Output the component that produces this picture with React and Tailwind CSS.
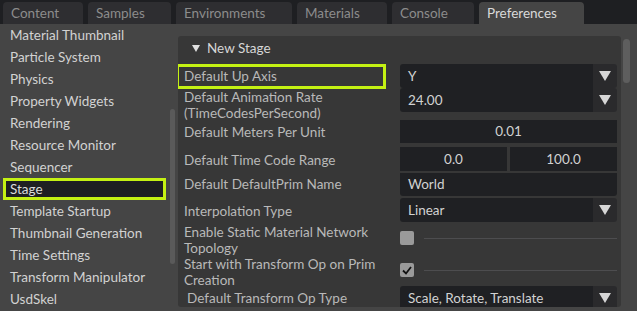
import React from "react";

const tabs = [
  { name: "Content", w: "w-[80px]" },
  { name: "Samples", w: "w-[83px]" },
  { name: "Environments", w: "w-[116px]" },
  { name: "Materials", w: "w-[90px]" },
  { name: "Console", w: "w-[82px]" },
  { name: "Preferences", w: "w-[105px]", active: true },
];

const pages = [
  "Material Thumbnail",
  "Particle System",
  "Physics",
  "Property Widgets",
  "Rendering",
  "Resource Monitor",
  "Sequencer",
  "Stage",
  "Template Startup",
  "Thumbnail Generation",
  "Time Settings",
  "Transform Manipulator",
  "UsdSkel",
];

function Arrow() {
  return (
    <svg width="12" height="10" viewBox="0 0 12 10">
      <path d="M0 0 L12 0 L6 10 Z" fill="#d6d6d6" />
    </svg>
  );
}

function Combo({ value, className = "" }) {
  return (
    <div className={`flex h-[24px] w-[217px] overflow-hidden rounded-[3px] ${className}`}>
      <div className="flex flex-1 items-center bg-[#1f2023] pl-[8px] text-[#d2d2d2]">{value}</div>
      <div className="flex w-[24px] items-center justify-center bg-[#2a2a2c]">
        <Arrow />
      </div>
    </div>
  );
}

function Field({ value, className = "" }) {
  return (
    <div className={`flex h-[23px] items-center justify-center bg-[#1f2023] text-[#d2d2d2] ${className}`}>
      {value}
    </div>
  );
}

function Check({ checked }) {
  return (
    <div className="mt-[7px] flex w-[217px] items-center">
      <div className="flex h-[14px] w-[14px] items-center justify-center rounded-[2px] bg-[#9a9a9a]">
        {checked && (
          <svg width="10" height="9" viewBox="0 0 10 9">
            <path d="M1 4.5 L4 7.5 L9 1" stroke="#111" strokeWidth="1.8" fill="none" />
          </svg>
        )}
      </div>
      <div className="ml-[10px] h-px flex-1 bg-[#4d4d4f]" />
    </div>
  );
}

function Label({ children, className = "" }) {
  return <div className={`w-[222px] pl-[6px] leading-[16px] text-[#b9b9b9] ${className}`}>{children}</div>;
}

export default function App() {
  return (
    <div
      className="flex h-[311px] w-[637px] flex-col overflow-hidden bg-[#454545] text-[13.5px]"
      style={{ fontFamily: "Lato, 'Open Sans', sans-serif" }}
    >
      {/* tab strip */}
      <div className="flex h-[24px] items-end gap-[5px] bg-[#1e1f22] pl-[3px]">
        {tabs.map((t) => (
          <div
            key={t.name}
            className={`flex h-[22px] items-center rounded-t-[4px] pl-[8px] ${t.w} ${
              t.active ? "bg-[#454545] text-[#d9d9d9]" : "bg-[#2e2e31] text-[#8c8c8c]"
            }`}
          >
            {t.name}
          </div>
        ))}
      </div>

      <div className="flex flex-1">
        {/* page list */}
        <div className="relative w-[178px]">
          {pages.map((p) =>
            p === "Stage" ? (
              <div
                key={p}
                className="ml-[3px] flex h-[22px] w-[163px] items-center border-[3px] border-[#c4f113] bg-[#1e1f22] pl-[4px] text-[#dadada]"
              >
                {p}
              </div>
            ) : (
              <div key={p} className="flex h-[22px] items-center pl-[10px] text-[#d2d2d2]">
                {p}
              </div>
            )
          )}
          <div className="absolute left-[170px] top-[85px] h-[155px] w-[5px] rounded-full bg-[#5a5a5a]" />
        </div>

        {/* settings panel */}
        <div className="mt-[12px] h-[271px] w-[443px] overflow-hidden rounded-[3px] bg-[#373737]">
          <div className="flex h-[24px] items-center pl-[14px] text-[#d6d6d6]">
            <svg width="8" height="7" viewBox="0 0 8 7" className="mr-[7px]">
              <path d="M0 0 L8 0 L4 7 Z" fill="#e0e0e0" />
            </svg>
            New Stage
          </div>

          <div className="mt-[4px] flex flex-col">
            <div className="relative flex h-[24px] items-center">
              <div className="absolute left-[-2px] top-[0px] h-[25px] w-[210px] border-[3px] border-[#c4f113]" />
              <Label>Default Up Axis</Label>
              <Combo value="Y" />
            </div>

            <div className="flex h-[32px] items-start">
              <Label className="pt-[1px]">
                Default Animation Rate
                <br />
                (TimeCodesPerSecond)
              </Label>
              <Combo value="24.00" />
            </div>

            <div className="flex h-[24px] items-start">
              <Label className="pt-[4px]">Default Meters Per Unit</Label>
              <Field value="0.01" className="w-[217px]" />
            </div>

            <div className="flex h-[28px] items-start">
              <Label className="pt-[8px]">Default Time Code Range</Label>
              <div className="mt-[3px] flex w-[217px] gap-[3px]">
                <Field value="0.0" className="h-[24px] w-[107px]" />
                <Field value="100.0" className="h-[24px] flex-1" />
              </div>
            </div>

            <div className="flex h-[24px] items-center">
              <Label>Default DefaultPrim Name</Label>
              <div className="flex h-[23px] w-[217px] items-center rounded-b-[3px] bg-[#1f2023] pl-[8px] text-[#d2d2d2]">
                World
              </div>
            </div>

            <div className="flex h-[28px] items-start">
              <Label className="pt-[7px]">Interpolation Type</Label>
              <Combo value="Linear" className="mt-[2px]" />
            </div>

            <div className="flex h-[32px] items-start">
              <Label>
                Enable Static Material Network
                <br />
                Topology
              </Label>
              <Check />
            </div>

            <div className="flex h-[30px] items-start">
              <Label>
                Start with Transform Op on Prim
                <br />
                Creation
              </Label>
              <Check checked />
            </div>

            <div className="flex h-[24px] items-center">
              <Label className="pl-[9px]">Default Transform Op Type</Label>
              <Combo value="Scale, Rotate, Translate" />
            </div>
          </div>
        </div>

        {/* right scrollbar */}
        <div className="relative flex-1">
          <div className="absolute left-[2px] top-[15px] h-[44px] w-[7px] rounded-full bg-[#5e5e5e]" />
        </div>
      </div>
    </div>
  );
}
